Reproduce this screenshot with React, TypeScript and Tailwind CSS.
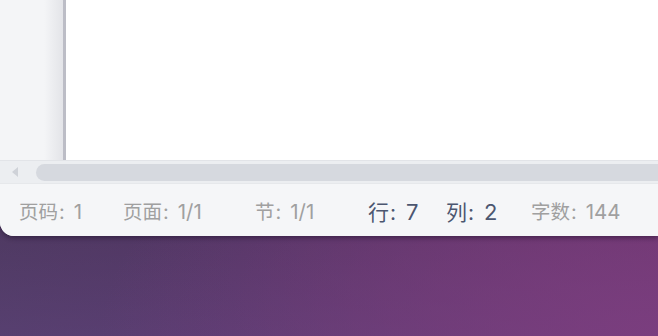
const items = [
  { name: "页码", value: "1", w: "w-[104px]", dark: false },
  { name: "页面", value: "1/1", w: "w-[132px]", dark: false },
  { name: "节", value: "1/1", w: "w-[113px]", dark: false },
  { name: "行", value: "7", w: "w-[78px]", dark: true },
  { name: "列", value: "2", w: "w-[85px]", dark: true },
  { name: "字数", value: "144", w: "w-[120px]", dark: false },
];

export default function App() {
  return (
    <div
      className="relative h-[336px] w-[658px] overflow-hidden bg-[linear-gradient(to_bottom,rgba(0,0,0,0)_25%,rgba(115,85,160,0.4)),linear-gradient(100deg,#43324f_0%,#4a2d53_40%,#672a5a_100%)]"
      style={{ fontFamily: '"Inter", "Noto Sans CJK SC", sans-serif' }}
    >
      <div className="pointer-events-none absolute inset-0 bg-[radial-gradient(ellipse_at_100%_100%,rgba(125,62,128,0.85)_0%,rgba(125,62,128,0)_60%)]" />
      <div className="relative flex h-[236px] w-full flex-col overflow-hidden rounded-bl-[14px] bg-[#f5f6f8] shadow-[0_2px_5px_rgba(20,10,30,0.45)]">
        <div className="flex h-[160px]">
          <div className="w-[63px] bg-[linear-gradient(to_right,#f4f5f7_0%,#f4f5f7_70%,#e3e4e8_100%)]" />
          <div className="w-[3px] bg-[#bcbdc6]" />
          <div className="flex-1 bg-white" />
        </div>
        <div className="flex h-[23px] items-center border-t border-[#e2e4e8] bg-[#eceef1]">
          <div className="ml-[12px] h-0 w-0 border-y-[5px] border-r-[6px] border-y-transparent border-r-[#cfd2d8]" />
          <div className="ml-[18px] h-[17px] flex-1 rounded-l-full bg-[#d6d9df]" />
        </div>
        <div className="flex flex-1 items-center border-t border-[#e6e8eb] bg-[#f5f6f8] pl-[19px] pt-[3px]">
          {items.map((it) => (
            <div
              key={it.name}
              className={
                it.dark
                  ? `${it.w} flex shrink-0 items-baseline leading-none text-[#4c5670]`
                  : `${it.w} flex shrink-0 items-baseline leading-none text-[#a0a0a0]`
              }
            >
              <span
                className={it.dark ? "text-[21px]" : "text-[19.5px]"}
                style={{ fontFamily: '"Noto Sans CJK SC", sans-serif' }}
              >
                {it.name}
              </span>
              <span className={it.dark ? "ml-[1px] text-[21px]" : "ml-[1px] text-[20px]"}>:</span>
              <span className={it.dark ? "ml-[10px] text-[22px]" : "ml-[9px] text-[20.5px]"}>
                {it.value}
              </span>
            </div>
          ))}
        </div>
      </div>
    </div>
  );
}
